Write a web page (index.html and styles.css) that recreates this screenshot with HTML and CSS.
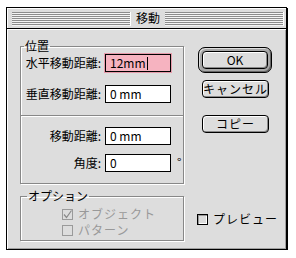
FILE: index.html
```html
<!DOCTYPE html>
<html lang="ja">
<head>
<meta charset="utf-8">
<link rel="stylesheet" href="styles.css">
</head>
<body>
<div class="window">
  <div class="titlebar">
    <span class="stripes"></span>
    <span class="title">移動</span>
    <span class="stripes"></span>
  </div>
  <div class="content">
    <div class="left">
      <fieldset class="group pos">
        <legend class="legend-pos">位置</legend>
        <div class="rows rows-a">
          <span class="lbl">水平移動距離:</span>
          <span class="field focus">12mm<span class="caret"></span></span>
          <span></span>
          <span class="lbl">垂直移動距離:</span>
          <span class="field">0 mm</span>
          <span></span>
        </div>
        <div class="sep"></div>
        <div class="rows rows-b">
          <span class="lbl">移動距離:</span>
          <span class="field">0 mm</span>
          <span></span>
          <span class="lbl">角度:</span>
          <span class="field">0</span>
          <span class="deg">°</span>
        </div>
      </fieldset>
      <fieldset class="group opt">
        <legend class="legend-opt">オプション</legend>
        <div class="checks">
          <div class="check disabled">
            <span class="box"><svg width="9" height="9" viewBox="0 0 9 9"><path d="M1 4.5 L3.5 7.5 L8.5 0.5" fill="none" stroke="#8a8a8a" stroke-width="1.2"/></svg></span>
            <span class="ctext">オブジェクト</span>
          </div>
          <div class="check disabled">
            <span class="box"></span>
            <span class="ctext">パターン</span>
          </div>
        </div>
      </fieldset>
    </div>
    <div class="right">
      <div class="ring"><button class="btn btn-ok">OK</button></div>
      <button class="btn btn-cancel">キャンセル</button>
      <button class="btn btn-copy">コピー</button>
      <div class="check preview">
        <span class="box"></span>
        <span class="ctext">プレビュー</span>
      </div>
    </div>
  </div>
</div>
</body>
</html>
```

FILE: styles.css
```css
* { box-sizing: border-box; }

body {
  margin: 0;
  background: #fff;
  font-family: "Noto Sans CJK JP", "Noto Sans", sans-serif;
  font-size: 12px;
  color: #000;
}

.window {
  margin: 7px 0 0 6px;
  width: 281px;
  height: 243px;
  border: 1px solid #000;
  box-shadow: 1px 1px 0 #000;
  background: #dddddd;
  display: flex;
  flex-direction: column;
}

.titlebar {
  height: 21px;
  flex: none;
  border-bottom: 1px solid #000;
  display: flex;
  align-items: center;
  padding: 0 2px 0 5px;
  gap: 3px;
  background: #dddddd;
  box-shadow: inset 1px 1px 0 #fff;
}

.stripes {
  flex: 1;
  height: 14px;
  margin-top: 1px;
  background: repeating-linear-gradient(to bottom, #8c8c8c 0 1px, #f4f4f4 1px 2px);
  border-right: 1px solid #fff;
}

.title {
  padding: 0 2px;
  line-height: 14px;
  font-size: 12px;
}

.content {
  flex: 1;
  display: flex;
  box-shadow: inset 1px 1px 0 #fff, inset -1px -1px 0 #a0a0a0;
}

.left {
  width: 177px;
  padding: 10px 0 0 13px;
  display: flex;
  flex-direction: column;
}

.group {
  margin: 0;
  padding: 0;
  width: 164px;
  border: 1px solid #888;
  box-shadow: 1px 1px 0 #fff, inset 1px 1px 0 #fff;
  min-width: 0;
}

legend {
  padding: 0 1px;
  line-height: 14px;
}

.legend-pos { margin-left: 3px; }
.legend-opt { margin-left: 6px; }

.rows {
  display: grid;
  grid-template-columns: 80px 66px auto;
  column-gap: 4px;
  align-items: center;
}

.rows-a { padding-top: 1px; row-gap: 13px; }
.rows-b { padding-top: 10px; row-gap: 9px; padding-bottom: 11px; }

.lbl {
  text-align: right;
  white-space: nowrap;
  line-height: 14px;
}

.field {
  height: 18px;
  border: 1px solid #000;
  background: #fff;
  padding-left: 4px;
  line-height: 16px;
  display: flex;
  align-items: center;
  white-space: pre;
}

.field.focus {
  background: #f6b3c0;
  box-shadow: 0 0 0 1px #e79aaa;
}

.caret {
  width: 1px;
  height: 13px;
  background: #000;
  margin-left: 1px;
}

.deg {
  line-height: 12px;
  padding-left: 2px;
  align-self: center;
  margin-top: -2px;
}

.sep {
  margin-top: 12px;
  border-top: 1px solid #888;
  border-bottom: 1px solid #fff;
}

.opt { margin-top: 5px; }

.checks {
  padding: 3px 0 2px 41px;
  display: flex;
  flex-direction: column;
}

.check {
  display: flex;
  align-items: center;
  height: 16px;
  gap: 5px;
}

.box {
  width: 11px;
  height: 11px;
  flex: none;
  border: 1px solid #000;
  background: #dcdcdc;
  box-shadow: inset 1px 1px 0 #9a9a9a, inset -1px -1px 0 #fff;
  display: flex;
  align-items: center;
  justify-content: center;
}

.check.disabled .box {
  border-color: #9a9a9a;
  box-shadow: none;
  background: #dddddd;
}

.check.disabled .ctext { color: #999; }

.ctext {
  line-height: 14px;
  letter-spacing: 1px;
}

.right {
  flex: 1;
  padding: 18px 0 0 14px;
  display: flex;
  flex-direction: column;
  align-items: flex-start;
}

.ring {
  width: 74px;
  height: 26px;
  border: 1px solid #000;
  border-radius: 7px;
  padding: 3px;
  background: #a8a8a8;
  box-shadow: inset 1px 1px 0 #ddd, inset -1px -1px 0 #666;
}

.btn {
  font-family: inherit;
  font-size: 12px;
  color: #000;
  margin: 0;
  padding: 0;
  width: 66px;
  height: 18px;
  border: 1px solid #000;
  border-radius: 4px;
  background: #dddddd;
  box-shadow: inset 1px 1px 0 #fff, inset -1px -1px 0 #8a8a8a;
  line-height: 16px;
  letter-spacing: 1px;
}

.btn-ok { letter-spacing: 0; }

.btn-cancel { margin: 7px 0 0 4px; width: 67px; }
.btn-copy { margin: 17px 0 0 4px; width: 67px; }

.preview {
  margin-top: 78px;
  margin-left: -1px;
  gap: 5px;
}
```
